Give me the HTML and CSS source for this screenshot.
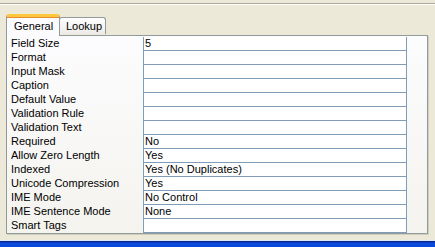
FILE: index.html
```html
<!DOCTYPE html>
<html>
<head>
<meta charset="utf-8">
<link rel="stylesheet" href="styles.css">
</head>
<body>
<div class="window">
  <div class="topline"></div>
  <div class="tabs">
    <div class="tab active">General</div>
    <div class="tab">Lookup</div>
  </div>
  <div class="panel">
    <div class="grid">
      <div class="label">Field Size</div><div class="value">5</div>
      <div class="label">Format</div><div class="value"></div>
      <div class="label">Input Mask</div><div class="value"></div>
      <div class="label">Caption</div><div class="value"></div>
      <div class="label">Default Value</div><div class="value"></div>
      <div class="label">Validation Rule</div><div class="value"></div>
      <div class="label">Validation Text</div><div class="value"></div>
      <div class="label">Required</div><div class="value">No</div>
      <div class="label">Allow Zero Length</div><div class="value">Yes</div>
      <div class="label">Indexed</div><div class="value">Yes (No Duplicates)</div>
      <div class="label">Unicode Compression</div><div class="value">Yes</div>
      <div class="label">IME Mode</div><div class="value">No Control</div>
      <div class="label">IME Sentence Mode</div><div class="value">None</div>
      <div class="label">Smart Tags</div><div class="value"></div>
    </div>
  </div>
  <div class="taskbar"></div>
</div>
</body>
</html>
```
FILE: styles.css
```css
html, body {
  margin: 0;
  padding: 0;
}
body {
  width: 435px;
  height: 247px;
  overflow: hidden;
  background: #ECE9D8;
  font-family: "Liberation Sans", Arial, sans-serif;
  font-size: 11px;
  color: #000;
}
.window {
  display: flex;
  flex-direction: column;
  height: 247px;
}
.topline {
  margin-top: 3px;
  height: 1px;
  border-bottom: 1px solid #FFFFFF;
  background: #ACA899;
}
.tabs {
  display: flex;
  align-items: flex-end;
  padding-left: 6px;
  margin-top: 8px;
  height: 22px;
  position: relative;
  z-index: 2;
}
.tab {
  box-sizing: border-box;
  height: 17px;
  width: 47px;
  margin-bottom: 1px;
  border: 1px solid #919B9C;
  border-bottom: none;
  border-radius: 3px 3px 0 0;
  background: linear-gradient(#FFFFFF, #ECEBE6);
  padding: 2px 0 0 6px;
  line-height: 13px;
}
.tab.active {
  height: 22px;
  width: 54px;
  margin-bottom: -1px;
  margin-right: -1px;
  border-top: 3px solid #FFC83C;
  box-shadow: inset 0 1px 0 #E68B2C;
  background: #FCFCFE;
  padding: 3px 0 0 7px;
  position: relative;
  z-index: 3;
}
.panel {
  box-sizing: border-box;
  margin-left: 6px;
  width: 422px;
  height: 199px;
  border: 1px solid #919B9C;
  box-shadow: 1px 1px 0 #D0CEBF;
  background: linear-gradient(#FCFCFE, #F4F3EE);
  padding-top: 1px;
}
.grid {
  display: grid;
  grid-template-columns: 136px 264px;
  grid-auto-rows: 14px;
}
.label {
  padding-left: 4px;
  line-height: 13px;
  white-space: nowrap;
}
.value {
  box-sizing: border-box;
  background: #FFFFFF;
  border-left: 1px solid #7F9DB9;
  border-right: 1px solid #7F9DB9;
  border-bottom: 1px solid #7F9DB9;
  padding-left: 1px;
  line-height: 13px;
  white-space: nowrap;
}
.taskbar {
  margin-top: auto;
  height: 6px;
  border-top: 1px solid #D8E4F8;
  background: linear-gradient(#0A2A8A 0, #0A2A8A 1px, #0A4AE0 2px, #0848D6);
}
```
